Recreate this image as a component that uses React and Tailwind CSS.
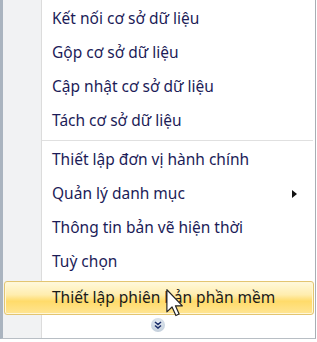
const items = [
  "Kết nối cơ sở dữ liệu",
  "Gộp cơ sở dữ liệu",
  "Cập nhật cơ sở dữ liệu",
  "Tách cơ sở dữ liệu",
];

const items2 = [
  { label: "Thiết lập đơn vị hành chính" },
  { label: "Quản lý danh mục", submenu: true },
  { label: "Thông tin bản vẽ hiện thời" },
  { label: "Tuỳ chọn" },
];

function MenuItem({ label, submenu }) {
  return (
    <div className="flex items-center h-[34px] pl-[49px] pr-4 text-[15.5px] text-[#1c1c58]">
      <span className="flex-1">{label}</span>
      {submenu && (
        <svg width="5" height="8" viewBox="0 0 5 8" className="mr-[2px]">
          <path d="M0 0 L5 4 L0 8 Z" fill="#111" />
        </svg>
      )}
    </div>
  );
}

function Separator() {
  return (
    <div className="h-[5px] flex items-center pl-[39px] pr-[2px]">
      <div className="w-full h-px bg-[#e0e0e0]" />
    </div>
  );
}

export default function App() {
  return (
    <div className="w-[317px] h-[342px] bg-white font-['Noto_Sans',sans-serif] overflow-hidden">
      <div className="relative w-[316px] h-[339px] border-l-[3px] border-l-[#aab4bf] border-r border-r-[#a8aeb4] border-b border-b-[#b8bec4] bg-[linear-gradient(to_right,#f1f2f3_0px,#f1f2f3_38px,#dcdcdc_38px,#dcdcdc_39px,#ffffff_39px)] pt-[2px]">
        {items.map((t) => (
          <MenuItem key={t} label={t} />
        ))}
        <Separator />
        {items2.map((it) => (
          <MenuItem key={it.label} label={it.label} submenu={it.submenu} />
        ))}

        {/* highlighted item */}
        <div className="mx-[1px] mt-[2px] h-[34px] flex items-center pl-[47px] rounded-[3px] border border-[#e3c571] bg-[linear-gradient(to_bottom,#fff9dc_0%,#ffedae_40%,#ffdb6a_60%,#ffe594_100%)] text-[15.5px] text-[#1a1a1a] shadow-[inset_0_0_0_1px_#fff7d8]">
          Thiết lập phiên bản phần mềm
        </div>

        {/* expand chevron */}
        <div className="flex justify-center pt-[3px] pr-[2px]">
          <div className="w-[14px] h-[14px] rounded-full bg-[radial-gradient(circle_at_50%_35%,#e8eef5,#b9c6d4)] flex items-center justify-center">
            <svg width="8" height="8" viewBox="0 0 8 8">
              <path d="M1 1 L4 3.5 L7 1 M1 4.5 L4 7 L7 4.5" fill="none" stroke="#1d2f6b" strokeWidth="1.6" />
            </svg>
          </div>
        </div>

        {/* mouse cursor */}
        <svg
          className="absolute left-[163px] top-[289px]"
          width="18"
          height="28"
          viewBox="0 0 12 19"
        >
          <path
            d="M0.5 0.5 L0.5 15.5 L4 12.2 L6.6 18 L8.8 17 L6.3 11.4 L11 11.4 Z"
            fill="#fff"
            stroke="#222"
            strokeWidth="0.8"
            strokeLinejoin="round"
          />
        </svg>
      </div>
    </div>
  );
}
